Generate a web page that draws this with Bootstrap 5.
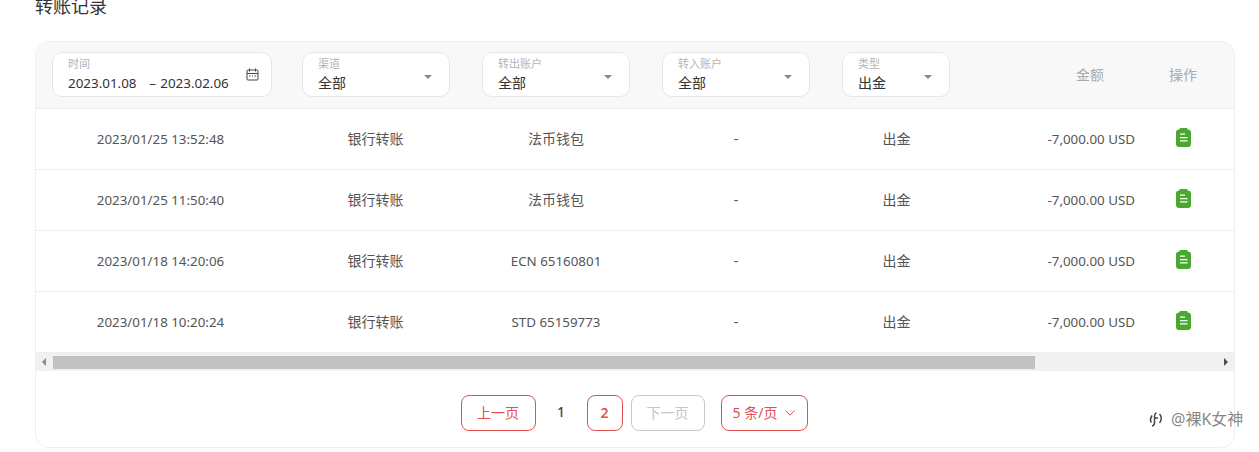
<!DOCTYPE html>
<html lang="zh-CN">
<head>
  <meta charset="UTF-8">
  <meta name="viewport" content="width=device-width, initial-scale=1.0">
  <title>转账记录</title>
  <link href="https://cdn.jsdelivr.net/npm/bootstrap@5.3.0/dist/css/bootstrap.min.css" rel="stylesheet">
  <style>
    html, body { height: 452px; overflow: hidden; }
    body {
      background: #fff;
      color: #555;
      font-family: "Noto Sans", "Noto Sans CJK SC", sans-serif;
      font-size: 14px;
      position: relative;
    }
    .page-wrap { padding: 0 24px 0 35px; }
    .page-title {
      font-size: 18px;
      line-height: 24px;
      font-weight: 400;
      color: #333;
      margin: -6px 0 23px;
    }
    .record-box {
      border: 1px solid #eee;
      border-radius: 14px;
      height: 407px;
      overflow: hidden;
    }
    .filter-bar {
      height: 67px;
      background: #f8f8f8;
      border-bottom: 1px solid #eee;
      padding: 0 0 1px 16px;
    }
    .filter-box {
      position: relative;
      flex: none;
      height: 45px;
      background: #fff;
      border: 1px solid #e6e6e6;
      border-radius: 10px;
      padding: 4px 15px 0;
      margin-right: 32px;
    }
    .w-time { width: 220px; margin-right: 30px; }
    .w-select { width: 148px; }
    .w-type { width: 108px; margin-right: 0; }
    .filter-label { font-size: 11px; line-height: 14px; color: #b4b4b4; }
    .filter-label.is-time { color: #a9b3c1; }
    .filter-value { font-size: 14px; line-height: 20px; margin-top: 2px; color: #333; white-space: pre; }
    .filter-value.is-date { font-size: 13.4px; word-spacing: 0.8px; }
    .select-caret {
      position: absolute;
      right: 17px;
      top: 22px;
      border-left: 4px solid transparent;
      border-right: 4px solid transparent;
      border-top: 4px solid #888;
    }
    .date-icon { position: absolute; right: 12px; top: 15px; }
    .head-amount { flex: none; width: 155px; text-align: right; color: #aaa; padding-right: 1px; }
    .head-action { flex: none; margin-left: 64px; color: #a3acb8; }
    .record-table { table-layout: fixed; width: 1198px; margin: 0; border-collapse: separate; border-spacing: 0; }
    .record-table td {
      height: 61px;
      padding: 0 0 1px;
      text-align: center;
      vertical-align: middle;
      color: #555;
      border-bottom: 1px solid #eee;
      background: transparent;
    }
    .record-table td.latin-text { font-size: 13.35px; padding-top: 1px; }
    .record-table td.cell-amount { text-align: right; padding-right: 15px; }
    .record-table td.cell-action { padding: 0 17px 5px 0; }
    .c-time { width: 249px; }
    .c-channel { width: 181px; }
    .c-out { width: 180px; }
    .c-in { width: 180px; }
    .c-type { width: 141px; }
    .c-amount { width: 183px; }
    .c-action { width: 84px; }
    .fake-scroll { height: 18px; background: #f1f1f1; position: relative; }
    .scroll-thumb { position: absolute; left: 17px; top: 3px; width: 982px; height: 13px; background: #c1c1c1; }
    .scroll-left, .scroll-right {
      position: absolute;
      top: 5px;
      border-top: 4px solid transparent;
      border-bottom: 4px solid transparent;
    }
    .scroll-left { left: 6px; border-right: 4px solid #888; }
    .scroll-right { right: 6px; border-left: 4px solid #505050; }
    .pager { padding: 24px 2px 0 0; }
    .pager-btn {
      height: 36px;
      padding: 0;
      border: 1px solid #e25050;
      border-radius: 8px;
      color: #e25050;
      background: #fff;
      font-size: 14px;
      line-height: 34px;
      font-family: inherit;
    }
    .pager-btn:disabled { border-color: #c8c8c8; color: #c4c4c4; background: #fff; opacity: 1; }
    .pager-wide { width: 75px; }
    .pager-next { width: 74px; }
    .pager-num { width: 36px; font-weight: 600; }
    .pager-size { width: 87px; margin-left: 8px; }
    .pager-current { width: 35px; text-align: center; line-height: 34px; height: 36px; font-weight: 500; color: #444; }
    .stamp {
      position: absolute;
      left: 1149px;
      top: 409px;
      color: #888;
      font-size: 16px;
      line-height: 20px;
      text-shadow: 0 0 2px #fff, 0 0 2px #fff;
    }
  </style>
</head>
<body>
  <div class="page-wrap">
    <h1 class="page-title">转账记录</h1>
    <div class="record-box">
      <div class="filter-bar d-flex align-items-center">
        <div class="filter-box w-time">
          <div class="filter-label is-time">时间</div>
          <div class="filter-value is-date">2023.01.08   – 2023.02.06</div>
          <svg class="date-icon" width="13" height="13" viewBox="0 0 13 13" fill="none" stroke="#444" stroke-width="1">
            <rect x="1" y="2" width="11" height="10" rx="1"/>
            <path d="M1 5.500h11M3.500 0.500v3M9.500 0.500v3M3 8h1.500M6 8h1M8.500 8h1.500"/>
          </svg>
        </div>
        <div class="filter-box w-select">
          <div class="filter-label">渠道</div>
          <div class="filter-value">全部</div>
          <span class="select-caret"></span>
        </div>
        <div class="filter-box w-select">
          <div class="filter-label">转出账户</div>
          <div class="filter-value">全部</div>
          <span class="select-caret"></span>
        </div>
        <div class="filter-box w-select">
          <div class="filter-label">转入账户</div>
          <div class="filter-value">全部</div>
          <span class="select-caret"></span>
        </div>
        <div class="filter-box w-type">
          <div class="filter-label">类型</div>
          <div class="filter-value">出金</div>
          <span class="select-caret"></span>
        </div>
        <div class="head-amount">金额</div>
        <div class="head-action">操作</div>
      </div>

      <table class="table record-table">
        <colgroup>
          <col class="c-time"><col class="c-channel"><col class="c-out"><col class="c-in"><col class="c-type"><col class="c-amount"><col class="c-action">
        </colgroup>
        <tbody id="rows"></tbody>
      </table>

      <div class="fake-scroll">
        <span class="scroll-left"></span>
        <div class="scroll-thumb"></div>
        <span class="scroll-right"></span>
      </div>

      <div class="pager d-flex justify-content-center gap-2">
        <button class="btn pager-btn pager-wide" type="button">上一页</button>
        <div class="pager-current">1</div>
        <button class="btn pager-btn pager-num" type="button">2</button>
        <button class="btn pager-btn pager-next" type="button" disabled>下一页</button>
        <button class="btn pager-btn pager-size d-flex align-items-center justify-content-center gap-2" type="button">
          5 条/页
          <svg width="10" height="6" viewBox="0 0 10 6" fill="none" stroke="#e25050" stroke-width="1"><path d="M0.500 0.500 5 5.200 9.500 0.500"/></svg>
        </button>
      </div>
    </div>
  </div>

  <div class="stamp d-flex align-items-center gap-2">
    <svg width="14" height="16" viewBox="0 0 14 16" fill="none" stroke="#444" stroke-width="1.500"><path d="M3 4.500C1.500 7 1 10 2.500 11.500M7.500 2C6 2 5.600 3.500 5.500 6V12C5.400 13.800 4.500 14.800 3 15M5.500 7H9M10.500 3C12.800 5.500 13 9.500 10.500 12"/></svg>
    <span>@裸K女神</span>
  </div>

  <script>
    var records = [
      ['2023/01/25 13:52:48', '法币钱包'],
      ['2023/01/25 11:50:40', '法币钱包'],
      ['2023/01/18 14:20:06', 'ECN 65160801'],
      ['2023/01/18 10:20:24', 'STD 65159773']
    ];
    var icon = '<svg width="15" height="19" viewBox="0 0 15 19"><path fill="#4aa82f" d="M4.500 0h6c.6 0 1 .4 1 1v.6h.5c1.600 0 3 1.200 3 3V16c0 1.700-1.300 3-3 3H3c-1.700 0-3-1.300-3-3V4.600c0-1.800 1.400-3 3-3h.5V1c0-.6.400-1 1-1z"/><path fill="#fff" d="M4 5.500h5v1.300H4zM4 9h7.500v1.300H4zM4 12.200h7.500v1.300H4z"/></svg>';
    document.getElementById('rows').innerHTML = records.map(function (r) {
      var accountClass = /\d/.test(r[1]) ? ' class="latin-text"' : '';
      return '<tr><td class="latin-text">' + r[0] + '</td><td>银行转账</td><td' + accountClass + '>' + r[1] + '</td><td>-</td><td>出金</td>' +
        '<td class="cell-amount latin-text">-7,000.00 USD</td><td class="cell-action">' + icon + '</td></tr>';
    }).join('');
  </script>
  <script src="https://cdn.jsdelivr.net/npm/bootstrap@5.3.0/dist/js/bootstrap.bundle.min.js"></script>
</body>
</html>
